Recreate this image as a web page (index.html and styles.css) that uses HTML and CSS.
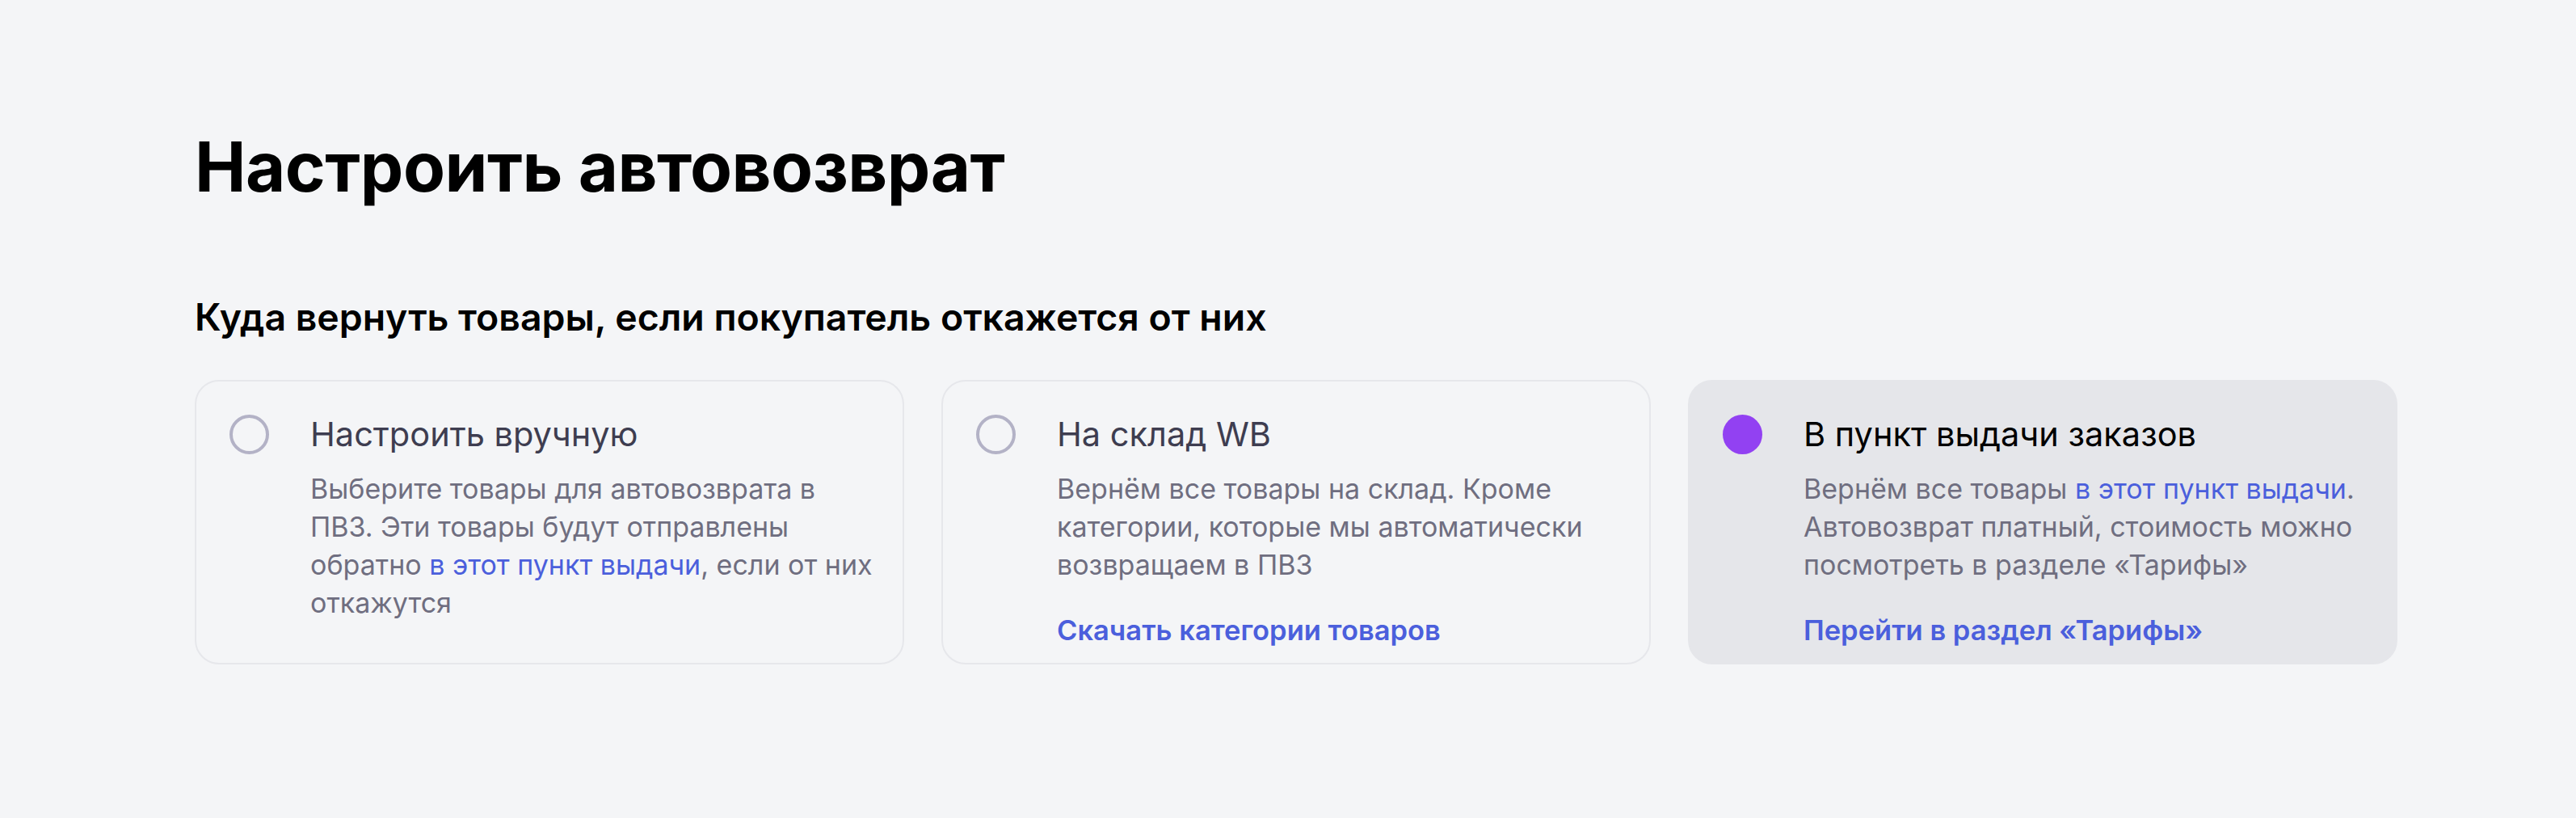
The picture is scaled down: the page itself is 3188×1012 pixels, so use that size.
FILE: index.html
```html
<!DOCTYPE html>
<html lang="ru">

<head>
    <meta charset="UTF-8">
    <meta name="viewport" content="width=device-width, initial-scale=1.0">
    <title>Настроить автовозврат</title>
    <link rel="stylesheet" href="styles.css">
</head>

<body>
    <div class="page">
        <h1>Настроить автовозврат</h1>
        <h2>Куда вернуть товары, если покупатель откажется от них</h2>
        <div class="options">
            <label class="option">
                <span class="radio"></span>
                <span class="option-body">
                    <span class="option-title">Настроить вручную</span>
                    <span class="option-text">Выберите товары для автовозврата в ПВЗ. Эти товары будут отправлены обратно <a href="#">в этот пункт выдачи</a>, если от них откажутся</span>
                </span>
            </label>
            <label class="option">
                <span class="radio"></span>
                <span class="option-body">
                    <span class="option-title">На склад WB</span>
                    <span class="option-text">Вернём все товары на склад. Кроме категории, которые мы автоматически возвращаем в ПВЗ</span>
                    <a class="option-link" href="#">Скачать категории товаров</a>
                </span>
            </label>
            <label class="option selected">
                <span class="radio"></span>
                <span class="option-body">
                    <span class="option-title">В пункт выдачи заказов</span>
                    <span class="option-text">Вернём все товары <a href="#">в этот пункт выдачи</a>. Автовозврат платный, стоимость можно посмотреть в разделе «Тарифы»</span>
                    <a class="option-link" href="#">Перейти в раздел «Тарифы»</a>
                </span>
            </label>
        </div>
    </div>
</body>

</html>
```

FILE: styles.css
```css
body {
    margin: 0;
    background-color: #f4f5f7;
    font-family: Inter, "Noto Sans", sans-serif;
    color: #000;
}

.page {
    width: 2726px;
    padding: 155px 0 100px 241px;
}

h1 {
    margin: 0;
    font-size: 85px;
    line-height: 104px;
    font-weight: 700;
    letter-spacing: -0.5px;
}

h2 {
    margin: 105px 0 0;
    font-size: 46.4px;
    line-height: 56px;
    font-weight: 600;
}

.options {
    margin-top: 50px;
    display: grid;
    grid-template-columns: repeat(3, 1fr);
    gap: 46px;
}

.option {
    display: flex;
    gap: 51px;
    padding: 40px 30px 17px 41px;
    border: 2px solid #e6e7eb;
    border-radius: 30px;
    cursor: pointer;
}

.option.selected {
    background-color: #e5e6ea;
    border-color: #e5e6ea;
}

.radio {
    flex: none;
    box-sizing: border-box;
    width: 49px;
    height: 49px;
    margin-top: 1px;
    border: 4px solid #b3b2c6;
    border-radius: 50%;
}

.selected .radio {
    border: none;
    background-color: #9241f2;
}

.option-body {
    display: flex;
    flex-direction: column;
}

.option-title {
    font-size: 41.5px;
    line-height: 50px;
    color: #3e3d50;
}

.selected .option-title {
    color: #000;
}

.option-text {
    max-width: 700px;
    margin-top: 19px;
    font-size: 34px;
    line-height: 47px;
    color: #6f6e80;
}

.option-text a,
.option-link {
    color: #4b5fdc;
    text-decoration: none;
}

.option-link {
    margin-top: 34px;
    font-size: 34.5px;
    line-height: 47px;
    font-weight: 600;
}
```
